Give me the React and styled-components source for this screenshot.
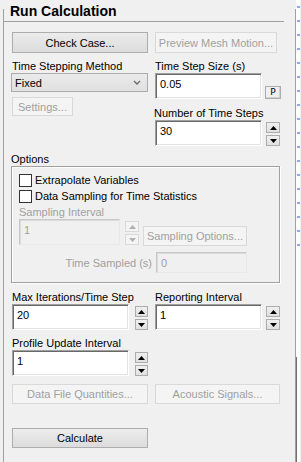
import styled, { createGlobalStyle } from "styled-components";

const Global = createGlobalStyle`
  html, body {
    margin: 0;
    padding: 0;
    background: #f0f0f0;
    overflow: hidden;
  }
  body {
    font-family: "Liberation Sans", Arial, sans-serif;
    font-size: 11px;
    color: #000;
  }
`;

const Page = styled.div`
  display: flex;
  width: 301px;
  height: 462px;
  background: #f0f0f0;
`;

const Gutter = styled.div`
  width: 3px;
  flex: none;
`;

const Panel = styled.div`
  flex: none;
  width: 293px;
  margin-top: 9px;
  border-left: 1px solid #a0a0a0;
  border-right: 1px solid #a0a0a0;
  box-sizing: border-box;
  display: flex;
  flex-direction: column;
`;

const Edge = styled.div`
  flex: none;
  width: 4px;
  background:
    linear-gradient(#6f6f6f, #6f6f6f) 0 357px / 1px 105px no-repeat,
    repeating-linear-gradient(#ffffff 0 6px, #8fa8e8 6px 8px, #ffffff 8px 14px) 1px 0 / 3px 250px no-repeat,
    #ffffff;
`;

const Title = styled.div`
  font-weight: bold;
  font-size: 14px;
  line-height: 13px;
  padding: 0 0 3px 6px;
  height: 13px;
  margin-right: 11px;
  margin-top: -4px;
  border-bottom: 1px solid #a0a0a0;
`;

const Body = styled.div`
  padding: 10px 0 0 8px;
  display: flex;
  flex-direction: column;
`;

const Top = styled.div`
  display: grid;
  grid-template-columns: 136px 125px;
  column-gap: 7px;
`;

const Column = styled.div`
  display: flex;
  flex-direction: column;
  align-items: flex-start;
`;

const Button = styled.button`
  box-sizing: border-box;
  width: ${(p) => p.$w}px;
  height: ${(p) => p.$h || 20}px;
  margin-top: ${(p) => p.$mt || 0}px;
  margin-left: ${(p) => p.$ml || 0}px;
  padding: 0;
  font-family: inherit;
  font-size: 11px;
  color: ${(p) => (p.disabled ? "#a0a0a0" : "#000")};
  background: ${(p) => (p.disabled ? "#f4f4f4" : "linear-gradient(#ececec, #dcdcdc)")};
  border: 1px solid ${(p) => (p.disabled ? "#d9d9d9" : "#adadad")};
  border-radius: 0;
  flex: none;
`;

const Label = styled.div`
  font-size: 11px;
  line-height: 14px;
  height: 14px;
  white-space: nowrap;
  margin-top: ${(p) => p.$mt || 0}px;
  margin-left: ${(p) => p.$ml || 0}px;
  color: ${(p) => (p.$dim ? "#a0a0a0" : "#000")};
`;

const Select = styled.div`
  box-sizing: border-box;
  width: 137px;
  height: 19px;
  margin-left: -1px;
  display: flex;
  align-items: center;
  justify-content: space-between;
  padding: 0 6px 0 3px;
  background: linear-gradient(#eaeaea, #e0e0e0);
  border: 1px solid #adadad;
`;

const Row = styled.div`
  display: flex;
  align-items: flex-start;
  margin-top: ${(p) => p.$mt || 0}px;
`;

const Field = styled.div`
  box-sizing: border-box;
  width: ${(p) => p.$w}px;
  height: ${(p) => p.$h || 26}px;
  flex: none;
  padding: 4px 0 0 4px;
  line-height: 13px;
  color: ${(p) => (p.$off ? "#a0a0a0" : "#000")};
  background: ${(p) => (p.$off ? "#f0f0f0" : "#ffffff")};
  border: 1px solid;
  border-color: ${(p) =>
    p.$off ? "#c8c8c8 #e8e8e8 #e8e8e8 #c8c8c8" : "#a0a0a0 #ffffff #ffffff #a0a0a0"};
  box-shadow: ${(p) =>
    p.$off
      ? "inset 1px 1px 0 #dadada"
      : "inset 1px 1px 0 #696969, inset -1px -1px 0 #e3e3e3"};
`;

const Spin = styled.div`
  display: flex;
  flex-direction: column;
  gap: 2px;
  margin-top: 2px;
  margin-left: ${(p) => p.$ml || 5}px;
  flex: none;
`;

const SpinBtn = styled.div`
  box-sizing: border-box;
  width: ${(p) => p.$w || 14}px;
  height: 11px;
  display: flex;
  align-items: center;
  justify-content: center;
  background: ${(p) => (p.$off ? "#f4f4f4" : "linear-gradient(#f0f0f0, #e0e0e0)")};
  border: 1px solid ${(p) => (p.$off ? "#d9d9d9" : "#adadad")};
`;

const PBtn = styled.div`
  box-sizing: border-box;
  width: 16px;
  height: 13px;
  margin: 13px 0 0 3px;
  font-size: 9px;
  line-height: 11px;
  text-align: center;
  font-family: "DejaVu Sans", sans-serif;
  background: #f0f0f0;
  border: 1px solid #adadad;
  box-shadow: inset -1px -1px 0 #d0d0d0;
`;

const Group = styled.div`
  box-sizing: border-box;
  width: 269px;
  height: 117px;
  margin-left: -1px;
  border: 1px solid #a0a0a0;
  box-shadow: inset 1px 1px 0 #ffffff, 1px 1px 0 #ffffff;
  padding: 7px 0 0 7px;
  display: flex;
  flex-direction: column;
`;

const Check = styled.label`
  display: flex;
  align-items: center;
  gap: 3px;
  height: 13px;
  margin-bottom: 3px;
  line-height: 13px;
  font-size: 11px;
  white-space: nowrap;
`;

const Box = styled.span`
  box-sizing: border-box;
  width: 13px;
  height: 13px;
  background: #ffffff;
  border: 1px solid #333333;
  flex: none;
`;

const TimeRow = styled.div`
  display: flex;
  justify-content: flex-end;
  align-items: center;
  width: 228px;
  margin-top: 6px;
  gap: 4px;
`;

const Arrow = ({ down, off }) => (
  <svg width="7" height="4" viewBox="0 0 7 4">
    <polygon
      points={down ? "0,0 7,0 3.5,4" : "0,4 7,4 3.5,0"}
      fill={off ? "#b0b0b0" : "#000"}
    />
  </svg>
);

const Spinner = ({ ml, w, off }) => (
  <Spin $ml={ml}>
    <SpinBtn $w={w} $off={off}>
      <Arrow off={off} />
    </SpinBtn>
    <SpinBtn $w={w} $off={off}>
      <Arrow down off={off} />
    </SpinBtn>
  </Spin>
);

export default function App() {
  return (
    <Page>
      <Global />
      <Gutter />
      <Panel>
        <Title>Run Calculation</Title>
        <Body>
          <Top>
            <Column>
              <Button $w={136} $h={21}>Check Case...</Button>
              <Label $mt={6}>Time Stepping Method</Label>
              <Select>
                <span>Fixed</span>
                <svg width="8" height="5" viewBox="0 0 8 5">
                  <polyline points="1,1 4,4 7,1" fill="none" stroke="#6a6a6a" strokeWidth="1.4" />
                </svg>
              </Select>
              <Button $w={61} $h={19} $mt={5} disabled>
                Settings...
              </Button>
            </Column>
            <Column>
              <Button $w={122} $h={21} disabled>
                Preview Mesh Motion...
              </Button>
              <Label $mt={6}>Time Step Size (s)</Label>
              <Row>
                <Field $w={107}>0.05</Field>
                <PBtn>P</PBtn>
              </Row>
              <Label $mt={7} $ml={-1}>Number of Time Steps</Label>
              <Row>
                <Field $w={107}>30</Field>
                <Spinner ml={4} />
              </Row>
            </Column>
          </Top>

          <Label $mt={6} $ml={-1}>Options</Label>
          <Group>
            <Check>
              <Box />
              Extrapolate Variables
            </Check>
            <Check>
              <Box />
              Data Sampling for Time Statistics
            </Check>
            <Label $dim $mt={-1}>Sampling Interval</Label>
            <Row>
              <Field $w={101} $off>1</Field>
              <Spinner ml={5} off />
              <Button $w={104} $mt={7} $ml={4} disabled>
                Sampling Options...
              </Button>
            </Row>
            <TimeRow>
              <Label $dim>Time Sampled (s)</Label>
              <Field $w={91} $h={21} $off>0</Field>
            </TimeRow>
          </Group>

          <Top>
            <Column>
              <Label $mt={7}>Max Iterations/Time Step</Label>
              <Row>
                <Field $w={117}>20</Field>
                <Spinner ml={6} w={13} />
              </Row>
              <Label $mt={6}>Profile Update Interval</Label>
              <Row>
                <Field $w={117}>1</Field>
                <Spinner ml={6} w={13} />
              </Row>
            </Column>
            <Column>
              <Label $mt={7}>Reporting Interval</Label>
              <Row>
                <Field $w={107}>1</Field>
                <Spinner ml={4} />
              </Row>
            </Column>
          </Top>

          <Top>
            <Column>
              <Button $w={136} $mt={8} disabled>
                Data File Quantities...
              </Button>
              <Button $w={136} $mt={24}>Calculate</Button>
            </Column>
            <Column>
              <Button $w={125} $mt={8} disabled>
                Acoustic Signals...
              </Button>
            </Column>
          </Top>
        </Body>
      </Panel>
      <Edge />
    </Page>
  );
}
